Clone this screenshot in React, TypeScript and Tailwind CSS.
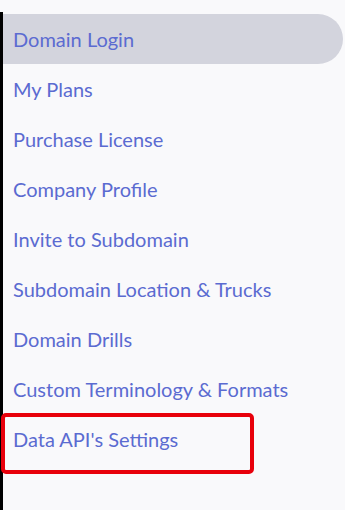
const items = [
  "Domain Login",
  "My Plans",
  "Purchase License",
  "Company Profile",
  "Invite to Subdomain",
  "Subdomain Location & Trucks",
  "Domain Drills",
  "Custom Terminology & Formats",
  "Data API's Settings",
];

export default function App() {
  return (
    <div className="h-[510px] w-[345px] bg-[#f9f9fb] pt-[12px] font-['Lato',sans-serif]">
      <div className="h-full border-l-[3px] border-black pt-[2px]">
        {items.map((label, i) => {
          const active = i === 0;
          const boxed = i === items.length - 1;
          return (
            <div
              key={label}
              className={
                "flex h-[50px] w-[340px] items-center pl-[10px] text-[20px] text-[#5b6bd1] " +
                (active ? "rounded-r-[25px] bg-[#d3d4dd]" : "") +
                (boxed ? "relative" : "")
              }
            >
              {label}
              {boxed && (
                <div className="absolute left-[-2px] top-[-1px] h-[61px] w-[253px] rounded-[5px] border-[4px] border-[#e8000b]" />
              )}
            </div>
          );
        })}
      </div>
    </div>
  );
}
